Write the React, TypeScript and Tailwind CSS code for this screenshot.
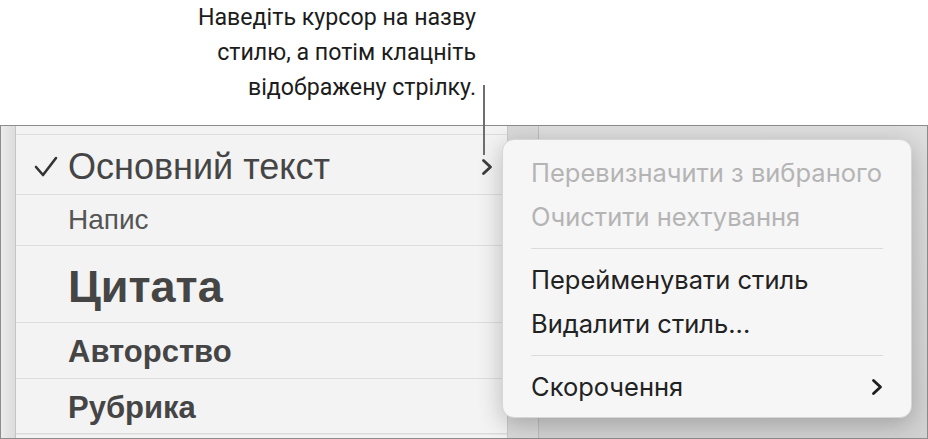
import React from 'react'

const sans = { fontFamily: '"Liberation Sans", Arial, sans-serif' }
const sf = { fontFamily: 'Inter, "Noto Sans", sans-serif' }
const note = { fontFamily: 'Roboto, "Noto Sans", sans-serif' }

function Chevron({ className }: { className?: string }) {
  return (
    <svg viewBox="0 0 12 18" className={className} fill="none">
      <path d="M2.5 2.5 L9.5 9 L2.5 15.5" stroke="currentColor" strokeWidth="2.8" strokeLinecap="round" strokeLinejoin="round" />
    </svg>
  )
}

function MenuItem({ children, disabled, chevron }: { children: React.ReactNode; disabled?: boolean; chevron?: boolean }) {
  return (
    <div
      className={`flex h-[44px] items-center justify-between pl-[28px] pr-[28px] text-[25.5px] ${disabled ? 'text-[#b4b4b4]' : 'text-[#222222]'}`}
    >
      <span>{children}</span>
      {chevron && <Chevron className="h-[18px] w-[12px] text-[#1e1e1e]" />}
    </div>
  )
}

export default function App() {
  return (
    <div className="relative h-[439px] w-[928px] overflow-hidden bg-white">
      {/* callout text */}
      <div className="flex h-[125px] justify-end pr-[452px] text-right text-[23.2px] leading-[35px] text-[#1c1c1c]" style={note}>
        <p>
          Наведіть курсор на назву
          <br />
          стилю, а потім клацніть
          <br />
          відображену стрілку.
        </p>
      </div>

      {/* app frame */}
      <div className="flex h-[314px] border-y border-x border-[#8c8c8c]">
        <div className="w-[15px] border-r border-[#c4c4c4] bg-gradient-to-r from-[#ececec] to-[#dcdcdc]" />

        <div className="flex w-[491px] flex-col bg-[#f3f3f3] text-[#454545]" style={sans}>
          <div className="h-[9px] border-b border-[#dddddd]" />
          <div className="flex h-[60px] items-center border-b border-[#dddddd] pt-[4px] pl-[18px] pr-[14px]">
            <svg viewBox="0 0 24 22" className="mr-[10px] h-[22px] w-[24px]" fill="none">
              <path d="M2 11 L9 19 L22 2" stroke="#333333" strokeWidth="2.6" strokeLinecap="round" strokeLinejoin="round" />
            </svg>
            <span className="flex-1 text-[36px] leading-none">Основний текст</span>
            <Chevron className="h-[18px] w-[12px] text-[#3c3c3c]" />
          </div>
          <div className="flex h-[51px] items-center border-b border-[#dddddd] pl-[52px] text-[28px] text-[#555555]">Напис</div>
          <div className="flex h-[77px] items-center border-b border-[#dddddd] pt-[5px] pl-[52px] text-[45px] font-bold">Цитата</div>
          <div className="flex h-[56px] items-center border-b border-[#dddddd] pt-[4px] pl-[52px] text-[31px] font-bold">Авторство</div>
          <div className="flex h-[55px] items-center border-b border-[#dcdcdc] pt-[5px] pl-[52px] text-[31px] font-bold">Рубрика</div>
          <div className="flex-1 border-t border-[#e6e6e6]" />
        </div>

        <div className="w-[31px] border-l border-[#c9c9c9] bg-[#d9d9d9]" />
        <div className="flex-1 border-l border-[#bdbdbd] bg-gradient-to-b from-[#dedede] to-[#d2d2d2]" />
      </div>

      {/* callout leader */}
      <div className="absolute left-[483px] top-[85px] h-[70px] w-[2px] bg-[#6e6e6e]" />

      {/* context menu */}
      <div
        className="absolute left-[502px] top-[139px] w-[410px] rounded-[12px] border border-[#d6d6d6] bg-[#f6f6f6] pt-[11px] pb-[8px] shadow-[0_6px_24px_rgba(0,0,0,0.24)]"
        style={sf}
      >
        <MenuItem disabled>Перевизначити з вибраного</MenuItem>
        <MenuItem disabled>Очистити нехтування</MenuItem>
        <div className="mx-[28px] my-[9px] h-px bg-[#dcdcdc]" />
        <MenuItem>Перейменувати стиль</MenuItem>
        <MenuItem>Видалити стиль...</MenuItem>
        <div className="mx-[28px] my-[9px] h-px bg-[#dcdcdc]" />
        <MenuItem chevron>Скорочення</MenuItem>
      </div>
    </div>
  )
}
